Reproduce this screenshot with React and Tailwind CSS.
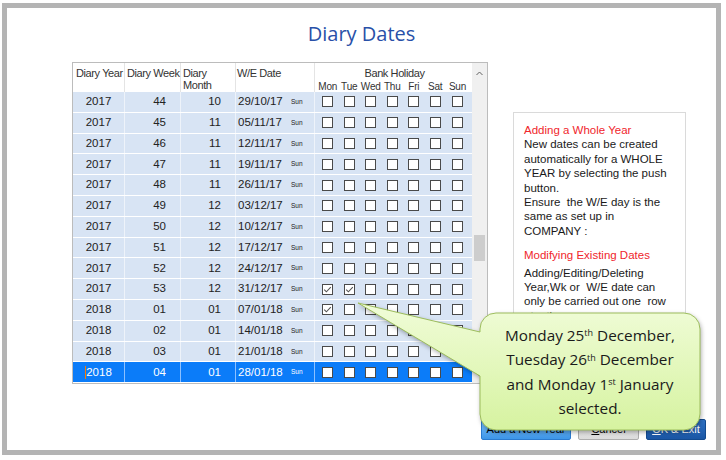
import React from "react";

const rows = [
  ["2017", "44", "10", "29/10/17"],
  ["2017", "45", "11", "05/11/17"],
  ["2017", "46", "11", "12/11/17"],
  ["2017", "47", "11", "19/11/17"],
  ["2017", "48", "11", "26/11/17"],
  ["2017", "49", "12", "03/12/17"],
  ["2017", "50", "12", "10/12/17"],
  ["2017", "51", "12", "17/12/17"],
  ["2017", "52", "12", "24/12/17"],
  ["2017", "53", "12", "31/12/17", [0, 1]],
  ["2018", "01", "01", "07/01/18", [0]],
  ["2018", "02", "01", "14/01/18"],
  ["2018", "03", "01", "21/01/18"],
  ["2018", "04", "01", "28/01/18", [], true],
];

const days = ["Mon", "Tue", "Wed", "Thu", "Fri", "Sat", "Sun"];
const dayW = ["w-[21.5px]", "w-[21.5px]", "w-[21.5px]", "w-[21.5px]", "w-[21.5px]", "w-[21.5px]", "w-[23px]"];

function Box({ checked }) {
  return (
    <span className="flex h-[11px] w-[11px] items-center justify-center border border-[#4a4a4a] bg-white">
      {checked && (
        <svg width="9" height="9" viewBox="0 0 9 9">
          <polyline points="1.2,4.6 3.4,6.8 7.8,2.2" fill="none" stroke="#555" strokeWidth="1.1" />
        </svg>
      )}
    </span>
  );
}

function Row({ r }) {
  const [year, week, month, date, checked = [], selected] = r;
  const bg = selected ? "bg-[#0b7cf9] text-white" : "bg-[#d8e4f4] text-[#222]";
  const line = selected ? "border-[#8cc0ff]" : "border-[#eef3fa]";
  return (
    <div className={`flex h-[20.8px] border-b border-white ${bg}`}>
      <div className={`flex w-[52px] items-center justify-center border-r ${line}`}>
        {selected ? <span className="border-l border-[#ff7a00] leading-[13px]">{year}</span> : year}
      </div>
      <div className={`flex w-[56px] items-center justify-end border-r pr-[14px] ${line}`}>{week}</div>
      <div className={`flex w-[55px] items-center justify-end border-r pr-[14px] ${line}`}>{month}</div>
      <div className={`flex w-[79px] items-center border-r ${line}`}>
        <span className="w-[55px] pl-[2px]">{date}</span>
        <span className="text-[6.5px]">Sun</span>
      </div>
      <div className="flex w-[157px] items-center pl-[2px]">
        {days.map((d, i) => (
          <div key={d} className={`flex justify-center ${dayW[i]}`}>
            <Box checked={checked.includes(i)} />
          </div>
        ))}
      </div>
    </div>
  );
}

function Grid() {
  return (
    <div className="flex h-[322px] w-[416px] border border-[#bcbcbc] font-['Liberation_Sans',Arial,sans-serif]">
      <div className="flex w-[399px] flex-col">
        <div className="flex h-[29px] bg-white text-[11px] leading-[11.5px] tracking-[-0.4px] text-[#333]">
          <div className="w-[52px] border-r border-[#e4e4e4] pl-[3px] pt-[5px]">Diary Year</div>
          <div className="w-[56px] border-r border-[#e4e4e4] pl-[2px] pt-[5px]">Diary Week</div>
          <div className="w-[55px] border-r border-[#e4e4e4] pl-[2px] pt-[5px]">Diary<br />Month</div>
          <div className="w-[79px] border-r border-[#e4e4e4] pl-[1px] pt-[5px]">W/E Date</div>
          <div className="flex w-[157px] flex-col pl-[2px] pt-[5px]">
            <div className="text-center">Bank Holiday</div>
            <div className="flex pt-[1px] text-[10px] tracking-[-0.2px]">
              {days.map((d, i) => (
                <div key={d} className={`text-center ${dayW[i]}`}>{d}</div>
              ))}
            </div>
          </div>
        </div>
        <div className="text-[11.5px]">
          {rows.map((r) => (
            <Row key={r[3]} r={r} />
          ))}
        </div>
      </div>
      <div className="flex w-[15px] flex-col bg-[#f0f0f0]">
        <div className="flex h-[17px] items-center justify-center pt-[3px]">
          <svg width="7" height="5" viewBox="0 0 7 5">
            <polyline points="0.5,4 3.5,1 6.5,4" fill="none" stroke="#606060" strokeWidth="1" />
          </svg>
        </div>
        <div className="flex-1">
          <div className="mx-[2px] mt-[155px] h-[26px] bg-[#cdcdcd]" />
        </div>
        <div className="flex h-[17px] items-center justify-center">
          <svg width="7" height="5" viewBox="0 0 7 5">
            <polyline points="0.5,1 3.5,4 6.5,1" fill="none" stroke="#606060" strokeWidth="1" />
          </svg>
        </div>
      </div>
    </div>
  );
}

function HelpPanel() {
  const red = "text-[#f0262c]";
  return (
    <div className="ml-[25px] mt-[50px] h-[292px] w-[173px] border border-[#dadada] pl-[10px] pt-[10px] font-['Liberation_Sans',Arial,sans-serif] text-[11.5px] leading-[14.4px] text-[#1a1a1a]">
      <div className={red}>Adding a Whole Year</div>
      <div>New dates can be created</div>
      <div>automatically for a WHOLE</div>
      <div>YEAR by selecting the push</div>
      <div>button.</div>
      <div className="whitespace-pre">Ensure  the W/E day is the</div>
      <div>same as set up in</div>
      <div>COMPANY :</div>
      <div className={`mt-[10px] ${red}`}>Modifying Existing Dates</div>
      <div className="mt-[3px]">Adding/Editing/Deleting</div>
      <div className="whitespace-pre">Year,Wk or  W/E date can</div>
      <div className="whitespace-pre">only be carried out one  row</div>
      <div>at a time.</div>
    </div>
  );
}

function Buttons() {
  return (
    <div className="mt-auto flex justify-end gap-[7px] pb-[10px] pr-[10px] font-['Liberation_Sans',Arial,sans-serif] text-[11px]">
      <button className="h-[21px] w-[90px] rounded-[2px] border border-[#2b7bd0] bg-gradient-to-b from-[#7cc0f8] to-[#3d96e8] text-black">
        Add a New Year
      </button>
      <button className="h-[21px] w-[61px] rounded-[2px] border border-[#adadad] bg-gradient-to-b from-[#f0f0f0] to-[#dcdcdc] text-black">
        <u>C</u>ancel
      </button>
      <button className="h-[21px] w-[60px] rounded-[2px] border border-[#134a8f] bg-gradient-to-b from-[#2f72c4] to-[#1a56a4] text-white">
        <u>O</u>K &amp; Exit
      </button>
    </div>
  );
}

function Callout() {
  return (
    <>
      <svg
        className="absolute left-[340px] top-[290px] drop-shadow-[1px_2px_2px_rgba(0,0,0,0.3)]"
        width="370"
        height="150"
        viewBox="0 0 370 150"
      >
        <defs>
          <linearGradient id="cg" x1="0" y1="0" x2="0" y2="1">
            <stop offset="0" stopColor="#f0fcd8" />
            <stop offset="1" stopColor="#d6f3a0" />
          </linearGradient>
        </defs>
        <path
          d="M156 23 H344 A16 16 0 0 1 360 39 V124 A16 16 0 0 1 344 140 H156 A16 16 0 0 1 140 124 V86 L18 13 L140 42 V39 A16 16 0 0 1 156 23 Z"
          fill="url(#cg)"
          stroke="#9cbc5c"
          strokeWidth="1"
        />
      </svg>
      <div className="absolute left-[480px] top-[313px] flex h-[117px] w-[220px] flex-col items-center justify-center text-center font-['Open_Sans',sans-serif] text-[15.3px] leading-[24.5px] text-[#1a1a1a]">
        <div>
          Monday 25<sup className="text-[9px]">th</sup> December,
        </div>
        <div>
          Tuesday 26<sup className="text-[9px]">th</sup> December
        </div>
        <div>
          and Monday 1<sup className="text-[9px]">st</sup> January
        </div>
        <div>selected.</div>
      </div>
    </>
  );
}

export default function App() {
  return (
    <div className="relative h-[460px] w-[726px] overflow-hidden bg-white">
      <div className="ml-[2px] mt-[3px] flex h-[452px] w-[719px] flex-col border-[5px] border-[#b4b4b4] bg-white">
        <h1 className="mt-[13px] h-[26px] text-center font-['Open_Sans',sans-serif] text-[20px] leading-[26px] text-[#2850a8]">
          Diary Dates
        </h1>
        <div className="mt-[15px] flex items-start pl-[65px]">
          <Grid />
          <HelpPanel />
        </div>
        <Buttons />
      </div>
      <Callout />
    </div>
  );
}
